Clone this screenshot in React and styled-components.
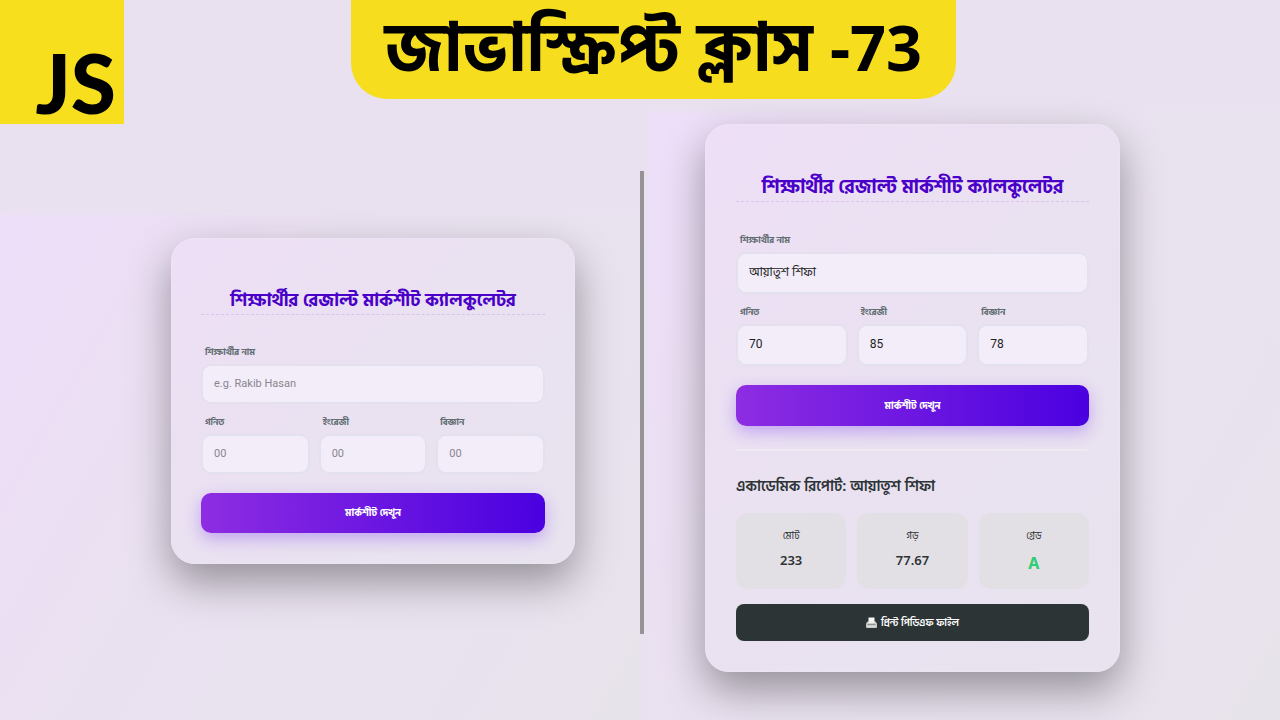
import React, { useState } from 'react';
import styled, { createGlobalStyle } from 'styled-components';

const GlobalStyle = createGlobalStyle`
  * {
    box-sizing: border-box;
  }

  body {
    margin: 0;
    background: #e9e1ef;
    font-family: "Noto Sans", "Hind Siliguri", "Noto Sans Bengali", sans-serif;
    color: #2d3436;
  }
`;

const Page = styled.div`
  display: flex;
  flex-direction: column;
  min-height: 100vh;
`;

const Header = styled.header`
  display: grid;
  grid-template-columns: 1fr auto 1fr;
  align-items: start;
  height: 108px;
`;

const Logo = styled.div`
  display: flex;
  align-items: flex-end;
  justify-content: flex-end;
  width: 124px;
  height: 124px;
  padding-right: 8px;
  background: #f7df1e;
  color: #000;
  font-family: Lato, sans-serif;
  font-size: 82px;
  font-weight: 900;
  line-height: 84px;
  z-index: 1;
`;

const Banner = styled.h1`
  min-width: 605px;
  height: 99px;
  margin: 0 0 0 27px;
  padding: 0 24px;
  border-radius: 0 0 36px 36px;
  background: #f6de1e;
  color: #000;
  font-size: 67px;
  font-weight: 700;
  line-height: 90px;
  text-align: center;
  white-space: nowrap;

  span {
    font-size: 63px;
  }
`;

const Main = styled.main`
  display: grid;
  grid-template-columns: 50% 4px 1fr;
  flex: 1;
`;

const Panel = styled.section`
  display: flex;
  align-items: flex-start;
  justify-content: ${({ $side }) => ($side === 'left' ? 'flex-end' : 'flex-start')};
  margin-top: ${({ $side }) => ($side === 'left' ? 102 : 0)}px;
  margin-left: ${({ $side }) => ($side === 'left' ? 0 : 5)}px;
  padding: ${({ $side }) => ($side === 'left' ? '28px 65px 28px 28px' : '16px 28px 28px 56px')};
  background:
    linear-gradient(to bottom, #e9e1ef, rgba(233, 225, 239, 0) 8px),
    linear-gradient(120deg, #eddffa 0%, #ecdff5 18%, #e9e1ef 42%, #e8e2ee 80%, #e7e3ea 100%);
`;

const Divider = styled.div`
  height: 463px;
  margin-top: 63px;
  background: #969396;
`;

const Card = styled.form`
  width: 100%;
  max-width: ${({ $wide }) => ($wide ? 415 : 404)}px;
  padding: ${({ $wide }) => ($wide ? '46px 30px 30px' : '45px 29px 30px')};
  border: 1px solid rgba(255, 255, 255, 0.12);
  border-radius: 24px;
  background: linear-gradient(135deg, #eedff6 0%, #eae1f1 45%, #e8e3ef 100%);
  background-origin: border-box;
  box-shadow: 0 18px 42px rgba(0, 0, 0, 0.36);
`;

const Title = styled.h2`
  margin: 0 0 ${({ $wide }) => ($wide ? 28 : 27)}px;
  border-bottom: 1px dashed rgba(138, 43, 226, 0.16);
  color: #4a00c8;
  font-size: ${({ $wide }) => ($wide ? 19 : 18)}px;
  font-weight: 800;
  line-height: 30px;
  text-align: center;
  white-space: nowrap;
`;

const Fields = styled.div`
  display: grid;
  grid-template-columns: repeat(${({ $columns }) => $columns}, 1fr);
  gap: 9px;
  margin-bottom: 8px;
`;

const Field = styled.label`
  display: block;
  color: #636e72;
  font-size: 9px;
  font-weight: 700;
  line-height: 20px;

  span {
    display: block;
    padding: 0 0 2px 4px;
  }
`;

const Input = styled.input`
  display: block;
  width: 100%;
  height: ${({ $wide }) => ($wide ? 42 : 40)}px;
  padding: 0 11px 2px;
  border: 2px solid #e3e1ee;
  border-radius: 10px;
  background: #f2edf9;
  color: #222;
  font-family: Roboto, "Hind Siliguri", "Noto Sans Bengali", sans-serif;
  font-size: 12px;
  outline: none;

  &::placeholder {
    color: #8a858f;
    font-size: 11px;
    opacity: 1;
  }
`;

const SubmitButton = styled.button`
  display: block;
  width: 100%;
  height: ${({ $wide }) => ($wide ? 41 : 40)}px;
  margin-top: 19px;
  border: none;
  border-radius: 10px;
  background: linear-gradient(to right, #8e2de2, #4a00e0);
  box-shadow: 0 6px 16px rgba(108, 40, 240, 0.32);
  color: #fff;
  font-family: inherit;
  font-size: 10px;
  font-weight: 800;
  cursor: pointer;
`;

const Report = styled.section`
  margin-top: 23px;
  border-top: 2px solid #efeaf2;
`;

const ReportTitle = styled.h3`
  margin: 19px 0 13px;
  font-size: 15px;
  font-weight: 600;
  line-height: 30px;
`;

const Stats = styled.div`
  display: grid;
  grid-template-columns: repeat(3, 1fr);
  gap: 11px;
`;

const Stat = styled.div`
  height: 76px;
  padding-top: 10px;
  border-radius: 12px;
  background: #e3e0e5;
  font-size: 10px;
  line-height: 24px;
  text-align: center;
`;

const StatValue = styled.strong`
  display: block;
  color: ${({ $grade }) => ($grade ? '#2ecc71' : '#2d3436')};
  font-size: ${({ $grade }) => ($grade ? 16 : 13)}px;
  font-weight: ${({ $grade }) => ($grade ? 700 : 600)};
  line-height: ${({ $grade }) => ($grade ? 32 : 26)}px;
`;

const PrintButton = styled.button`
  display: flex;
  align-items: center;
  justify-content: center;
  gap: 4px;
  width: 100%;
  height: 37px;
  margin-top: 15px;
  border: none;
  border-radius: 8px;
  background: #2d3436;
  color: #fff;
  font-family: inherit;
  font-size: 10px;
  font-weight: 600;
  cursor: pointer;
`;

const PrinterIcon = () => (
  <svg width="11" height="12" viewBox="0 0 22 24" aria-hidden="true">
    <path d="M5 1h12v10H5z" fill="#fafafa" />
    <path d="M3 9h16l3 4v7a2 2 0 0 1-2 2H2a2 2 0 0 1-2-2v-7z" fill="#c9cbc8" />
    <path d="M5 9h12v3H5z" fill="#f4f4f2" />
    <path d="M3 14h16v2H3z" fill="#8f938f" />
    <path d="M3 18h16v2H3z" fill="#dededb" />
  </svg>
);

const subjects = [
  { key: 'math', label: 'গনিত' },
  { key: 'english', label: 'ইংরেজী' },
  { key: 'science', label: 'বিজ্ঞান' },
];

const getGrade = (average) => {
  if (average >= 80) return 'A+';
  if (average >= 70) return 'A';
  if (average >= 60) return 'A-';
  if (average >= 50) return 'B';
  if (average >= 40) return 'C';
  return average >= 33 ? 'D' : 'F';
};

function Calculator({ initial, wide }) {
  const [form, setForm] = useState(initial);
  const [report, setReport] = useState(initial.name ? initial : null);

  const handleChange = (e) => {
    setForm({ ...form, [e.target.name]: e.target.value });
  };

  const handleSubmit = (e) => {
    e.preventDefault();
    setReport(form);
  };

  const total = report ? subjects.reduce((sum, s) => sum + Number(report[s.key]), 0) : 0;
  const average = total / subjects.length;

  return (
    <Card $wide={wide} onSubmit={handleSubmit}>
      <Title $wide={wide}>শিক্ষার্থীর রেজাল্ট মার্কশীট ক্যালকুলেটর</Title>
      <Fields $columns={1}>
        <Field>
          <span>শিক্ষার্থীর নাম</span>
          <Input
            $wide={wide}
            name="name"
            placeholder="e.g. Rakib Hasan"
            value={form.name}
            onChange={handleChange}
          />
        </Field>
      </Fields>
      <Fields $columns={3}>
        {subjects.map((s) => (
          <Field key={s.key}>
            <span>{s.label}</span>
            <Input
              $wide={wide}
              name={s.key}
              placeholder="00"
              value={form[s.key]}
              onChange={handleChange}
            />
          </Field>
        ))}
      </Fields>
      <SubmitButton $wide={wide} type="submit">মার্কশীট দেখুন</SubmitButton>
      {report && (
        <Report>
          <ReportTitle>একাডেমিক রিপোর্ট: {report.name}</ReportTitle>
          <Stats>
            <Stat>
              মোট
              <StatValue>{total}</StatValue>
            </Stat>
            <Stat>
              গড়
              <StatValue>{average.toFixed(2)}</StatValue>
            </Stat>
            <Stat>
              গ্রেড
              <StatValue $grade>{getGrade(average)}</StatValue>
            </Stat>
          </Stats>
          <PrintButton type="button" onClick={() => window.print()}>
            <PrinterIcon />
            প্রিন্ট পিডিএফ ফাইল
          </PrintButton>
        </Report>
      )}
    </Card>
  );
}

function App() {
  return (
    <Page>
      <GlobalStyle />
      <Header>
        <Logo>JS</Logo>
        <Banner>
          জাভাস্ক্রিপ্ট ক্লাস <span>-73</span>
        </Banner>
      </Header>
      <Main>
        <Panel $side="left">
          <Calculator initial={{ name: '', math: '', english: '', science: '' }} />
        </Panel>
        <Divider />
        <Panel $side="right">
          <Calculator wide initial={{ name: 'আয়াতুশ শিফা', math: '70', english: '85', science: '78' }} />
        </Panel>
      </Main>
    </Page>
  );
}

export default App;
